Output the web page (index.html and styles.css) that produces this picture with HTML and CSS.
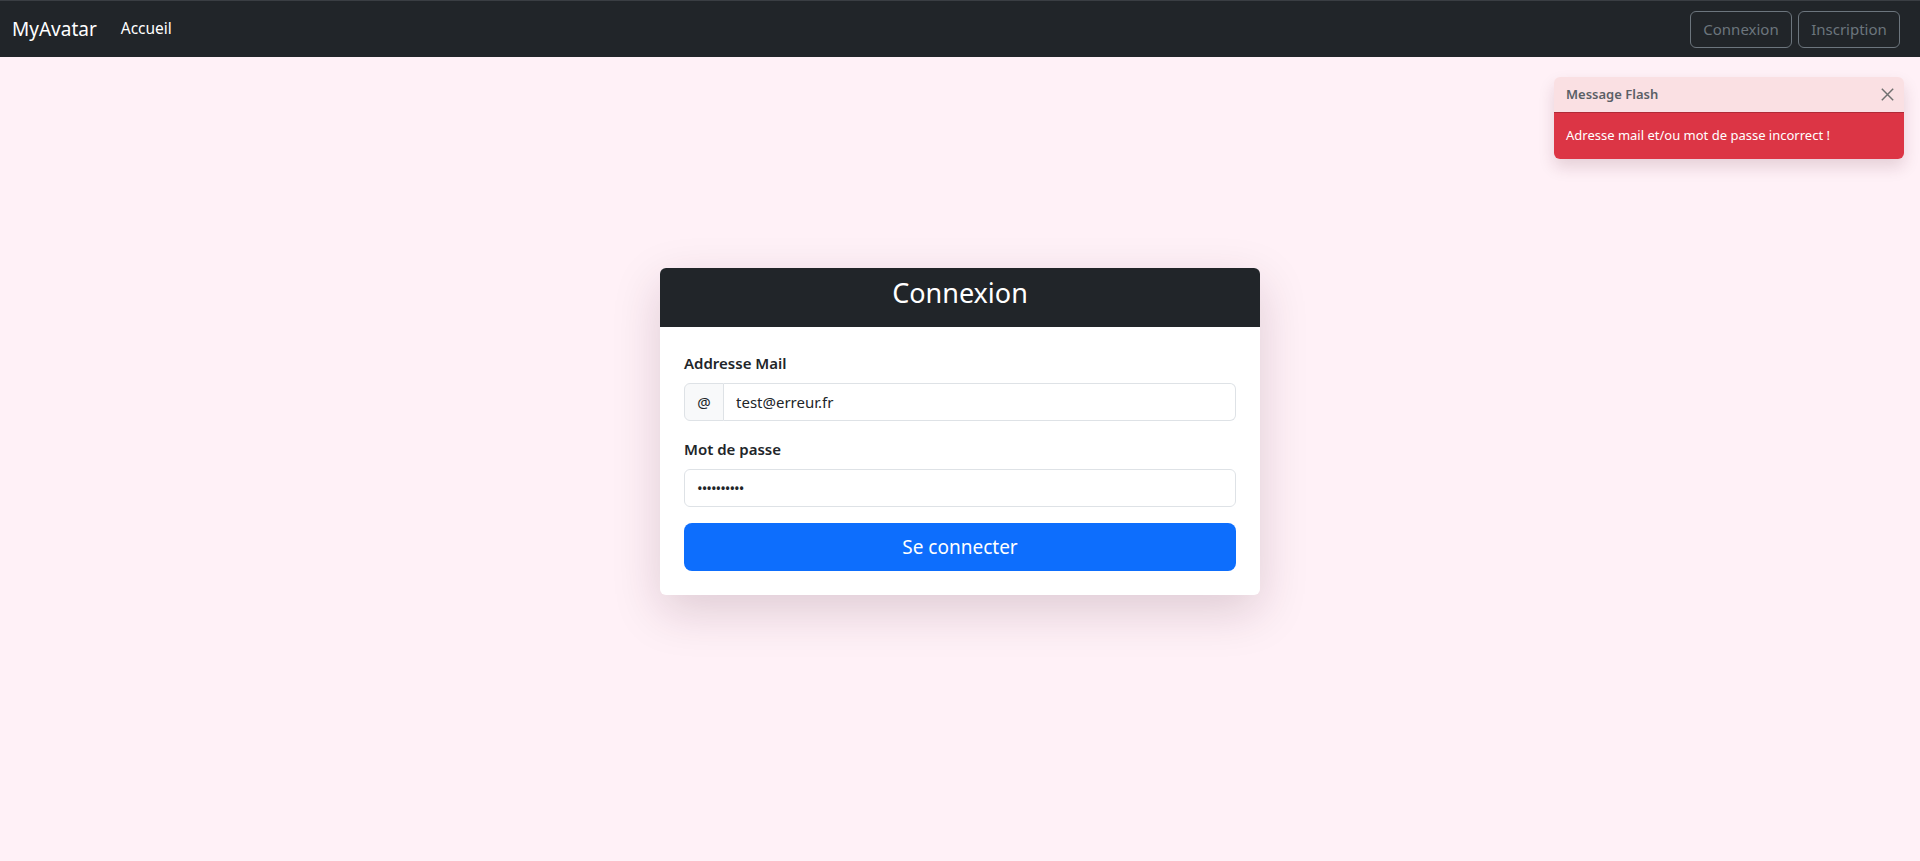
FILE: index.html
```html
<!DOCTYPE html>
<html lang="fr">
<head>
    <meta charset="UTF-8">
    <meta name="viewport" content="width=device-width, initial-scale=1.0">
    <title>MyAvatar - Connexion</title>
    <link rel="stylesheet" href="styles.css">
</head>
<body>
    <nav class="navbar">
        <div class="nav-left">
            <a class="brand" href="#">MyAvatar</a>
            <a class="nav-link" href="#">Accueil</a>
        </div>
        <div class="nav-right">
            <a class="btn-outline" href="#">Connexion</a>
            <a class="btn-outline" href="#">Inscription</a>
        </div>
    </nav>

    <div class="toast">
        <div class="toast-header">
            <strong>Message Flash</strong>
            <button class="btn-close" type="button" aria-label="Close">
                <svg width="13" height="13" viewBox="0 0 16 16"><path d="M1 1L15 15M15 1L1 15" stroke="currentColor" stroke-width="1.8" fill="none"/></svg>
            </button>
        </div>
        <div class="toast-body">Adresse mail et/ou mot de passe incorrect !</div>
    </div>

    <main class="page">
        <div class="card">
            <div class="card-header">
                <h3>Connexion</h3>
            </div>
            <form class="card-body">
                <label class="form-label" for="email">Addresse Mail</label>
                <div class="input-group">
                    <span class="input-addon">@</span>
                    <input type="text" id="email" class="form-control" value="test@erreur.fr">
                </div>
                <label class="form-label" for="password">Mot de passe</label>
                <input type="password" id="password" class="form-control solo" value="motdepasse">
                <button type="button" class="btn-primary">Se connecter</button>
            </form>
        </div>
    </main>
</body>
</html>
```

FILE: styles.css
```css
* {
    box-sizing: border-box;
}

body {
    margin: 0;
    font-family: "Noto Sans", "Open Sans", sans-serif;
    font-size: 16px;
    line-height: 1.5;
    color: #212529;
    background-color: #fff1f7;
    min-height: 100vh;
}

.navbar {
    display: flex;
    justify-content: space-between;
    align-items: center;
    height: 57px;
    padding: 0 20px 0 12px;
    background-color: #212529;
    border-top: 1px solid #3a3e43;
}

.nav-left {
    display: flex;
    align-items: center;
}

.brand {
    font-size: 19px;
    color: #fff;
    text-decoration: none;
    margin-right: 24px;
}

.nav-link {
    font-size: 15.5px;
    color: #fff;
    text-decoration: none;
}

.nav-right {
    display: flex;
    gap: 6px;
}

.btn-outline {
    display: inline-block;
    height: 37px;
    width: 102px;
    line-height: 35px;
    text-align: center;
    font-size: 15px;
    color: #6c757d;
    border: 1px solid #6c757d;
    border-radius: 6px;
    text-decoration: none;
}

.toast {
    position: absolute;
    top: 77px;
    right: 16px;
    width: 350px;
    border-radius: 6px;
    overflow: hidden;
    box-shadow: 0 8px 16px rgba(80, 20, 40, 0.15);
    font-size: 13px;
}

.toast-header {
    display: flex;
    justify-content: space-between;
    align-items: center;
    height: 36px;
    padding: 0 10px 0 12px;
    background-color: #fae0e3;
    color: #5a5f66;
    border-bottom: 1px solid #b02a37;
}

.toast-header strong {
    font-weight: 600;
}

.btn-close {
    display: flex;
    padding: 0;
    border: none;
    background: none;
    color: #707070;
    cursor: pointer;
}

.toast-body {
    height: 46px;
    padding: 13px 12px;
    background-color: #dc3545;
    color: #fff;
}

.page {
    display: flex;
    justify-content: center;
    padding-top: 211px;
}

.card {
    width: 600px;
    background-color: #fff;
    border-radius: 6px;
    overflow: hidden;
    box-shadow: 0 16px 48px rgba(60, 20, 40, 0.17);
}

.card-header {
    height: 59px;
    background-color: #212529;
    color: #fff;
    text-align: center;
    padding-top: 9px;
}

.card-header h3 {
    margin: 0;
    font-size: 27px;
    font-weight: 400;
    line-height: 1.2;
}

.card-body {
    display: flex;
    flex-direction: column;
    padding: 24px;
}

.form-label {
    font-weight: 600;
    font-size: 15px;
    line-height: 24px;
    margin-bottom: 8px;
}

.input-group {
    display: flex;
    margin-bottom: 16px;
}

.input-addon {
    width: 40px;
    height: 38px;
    line-height: 36px;
    text-align: center;
    font-size: 15px;
    background-color: #f8f9fa;
    border: 1px solid #dee2e6;
    border-radius: 6px 0 0 6px;
}

.form-control {
    flex: 1;
    height: 38px;
    padding: 6px 12px;
    font-family: inherit;
    font-size: 15px;
    color: #212529;
    border: 1px solid #dee2e6;
    border-radius: 0 6px 6px 0;
    border-left: none;
    outline: none;
}

.form-control.solo {
    flex: none;
    border-left: 1px solid #dee2e6;
    border-radius: 6px;
    margin-bottom: 16px;
    letter-spacing: -1px;
}

.btn-primary {
    flex: none;
    height: 48px;
    font-family: inherit;
    font-size: 19px;
    color: #fff;
    background-color: #0d6efd;
    border: none;
    border-radius: 8px;
    cursor: pointer;
}
```
